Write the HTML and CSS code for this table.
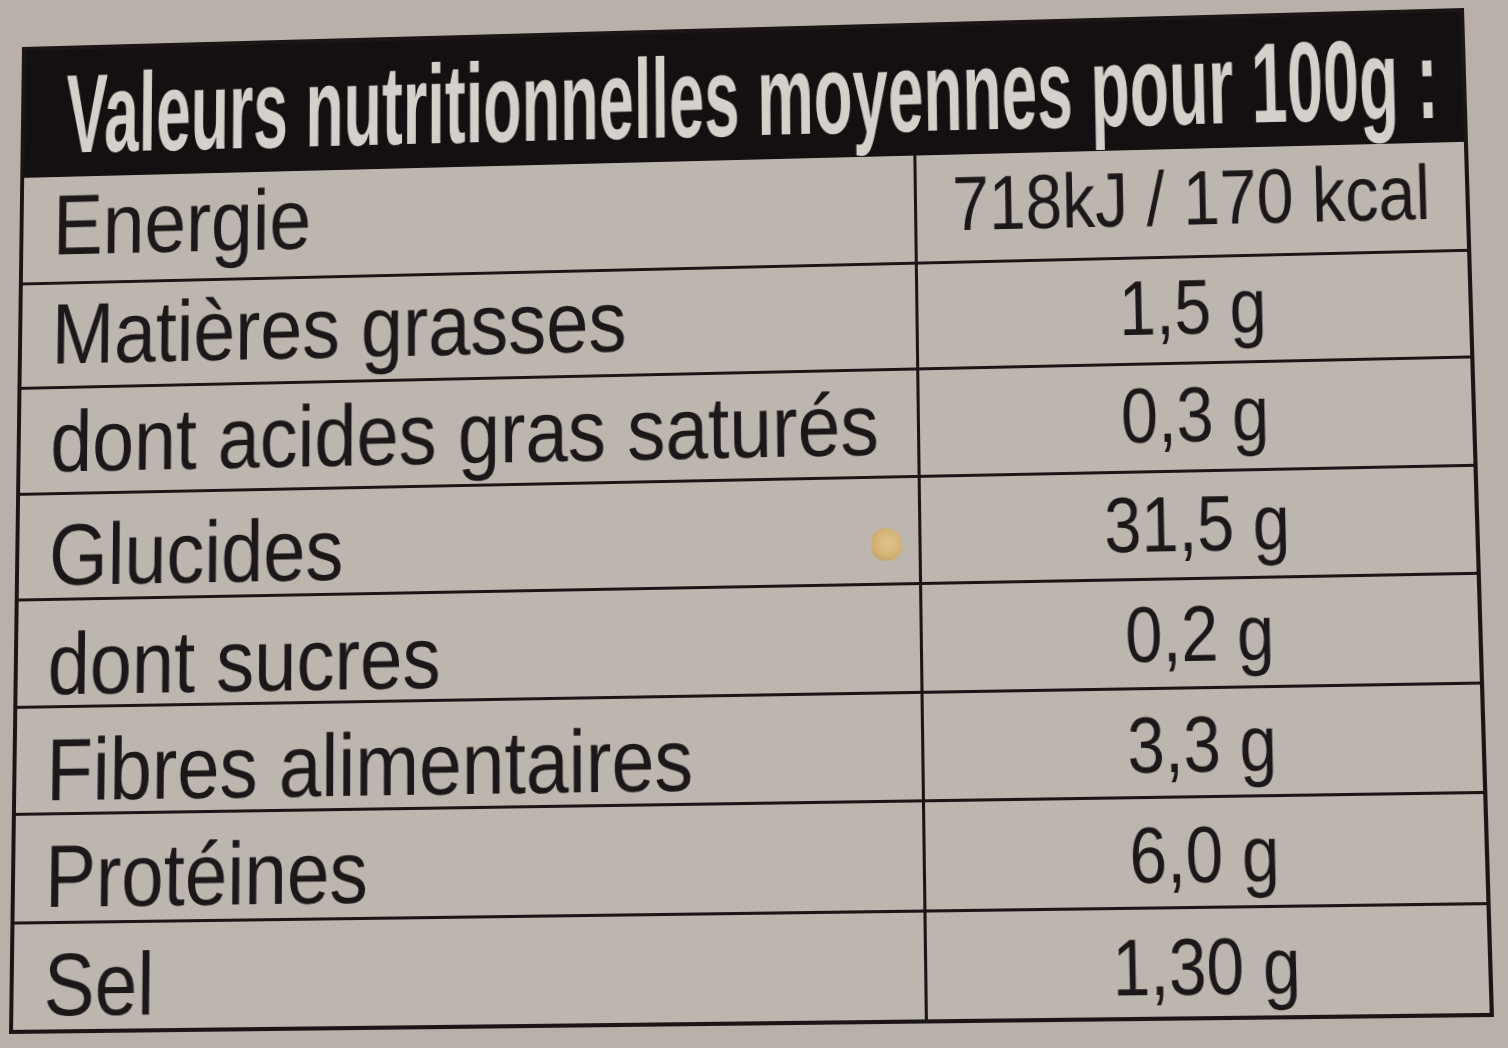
FILE: index.html
```html
<!DOCTYPE html>
<html lang="fr">
<head>
<meta charset="utf-8">
<title>Valeurs nutritionnelles</title>
<link rel="stylesheet" href="styles.css">
</head>
<body>
<div class="label">
  <div class="head"><span class="head-text">Valeurs nutritionnelles moyennes pour 100g :</span></div>
  <div class="row"><div class="name"><span>Energie</span></div><div class="val"><span>718kJ / 170 kcal</span></div></div>
  <div class="row"><div class="name"><span>Matières grasses</span></div><div class="val"><span>1,5 g</span></div></div>
  <div class="row"><div class="name"><span>dont acides gras saturés</span></div><div class="val"><span>0,3 g</span></div></div>
  <div class="row"><div class="name"><span>Glucides</span></div><div class="val"><span>31,5 g</span></div></div>
  <div class="row"><div class="name"><span>dont sucres</span></div><div class="val"><span>0,2 g</span></div></div>
  <div class="row"><div class="name"><span>Fibres alimentaires</span></div><div class="val"><span>3,3 g</span></div></div>
  <div class="row"><div class="name"><span>Protéines</span></div><div class="val"><span>6,0 g</span></div></div>
  <div class="row"><div class="name"><span>Sel</span></div><div class="val"><span>1,30 g</span></div></div>
  <div class="crumb"></div>
</div>
</body>
</html>
```
FILE: styles.css
```css
html, body {
  margin: 0;
  padding: 0;
  width: 1508px;
  height: 1048px;
  overflow: hidden;
  background: #b8b0a9;
}

.label {
  position: relative;
  width: 1440px;
  height: 1000px;
  box-sizing: border-box;
  border: 4px solid #1b1516;
  background: #bdb6af;
  display: grid;
  grid-template-columns: minmax(0, 1fr);
  grid-template-rows: 132px repeat(8, minmax(0, 1fr));
  transform-origin: 0 0;
  transform: matrix3d(0.978733, -0.027207, 0, -0.000015475,
                      -0.0132566, 0.957525, 0, -0.000028506,
                      0, 0, 1, 0,
                      22, 47, 0, 1);
  filter: blur(0.6px);
  font-family: "Liberation Sans", Arial, sans-serif;
  color: #1c1718;
}

.head {
  background: #141011;
  color: #d4d0cc;
  display: flex;
  align-items: center;
  padding-left: 42px;
  overflow: hidden;
  min-width: 0;
}

.head-text {
  display: inline-block;
  font-weight: bold;
  font-size: 116px;
  line-height: 1;
  white-space: nowrap;
  transform: scaleX(0.545);
  transform-origin: left center;
  margin-top: 2px;
}

.row {
  --dy: 0px;
  --vy: 0px;
  display: grid;
  grid-template-columns: 895px minmax(0, 1fr);
  border-top: 3px solid #1b1516;
  min-width: 0;
}

.row:nth-child(2) { border-top: none; --dy: -4px; --vy: -4px; }
.row:nth-child(3) { --dy: -1px; --vy: -3px; }
.row:nth-child(4) { --dy: 2px; --vy: -2px; }
.row:nth-child(5) { --dy: 9px; --vy: -1px; }
.row:nth-child(6) { --dy: 12px; --vy: 1px; }
.row:nth-child(7) { --dy: 10px; --vy: 2px; }
.row:nth-child(8) { --dy: 9px; --vy: 3px; }
.row:nth-child(9) { --dy: 8px; --vy: 4px; }

.name {
  border-right: 3px solid #1b1516;
  display: flex;
  align-items: center;
  padding-left: 30px;
  min-width: 0;
}

.name span {
  display: inline-block;
  font-size: 88px;
  line-height: 1;
  white-space: nowrap;
  transform: translateY(var(--dy)) scaleX(0.86);
  transform-origin: left center;
}

.val {
  display: flex;
  align-items: center;
  justify-content: center;
  min-width: 0;
}

.val span {
  display: inline-block;
  font-size: 78px;
  line-height: 1;
  white-space: nowrap;
  transform: translateY(var(--vy)) scaleX(0.83);
  transform-origin: center center;
}

.crumb {
  position: absolute;
  left: 846px;
  top: 508px;
  width: 30px;
  height: 32px;
  border-radius: 40% 50% 45% 40%;
  background: radial-gradient(circle at 55% 45%, #e0c48e 0%, #d4b274 55%, #b89a6a 100%);
}
```
